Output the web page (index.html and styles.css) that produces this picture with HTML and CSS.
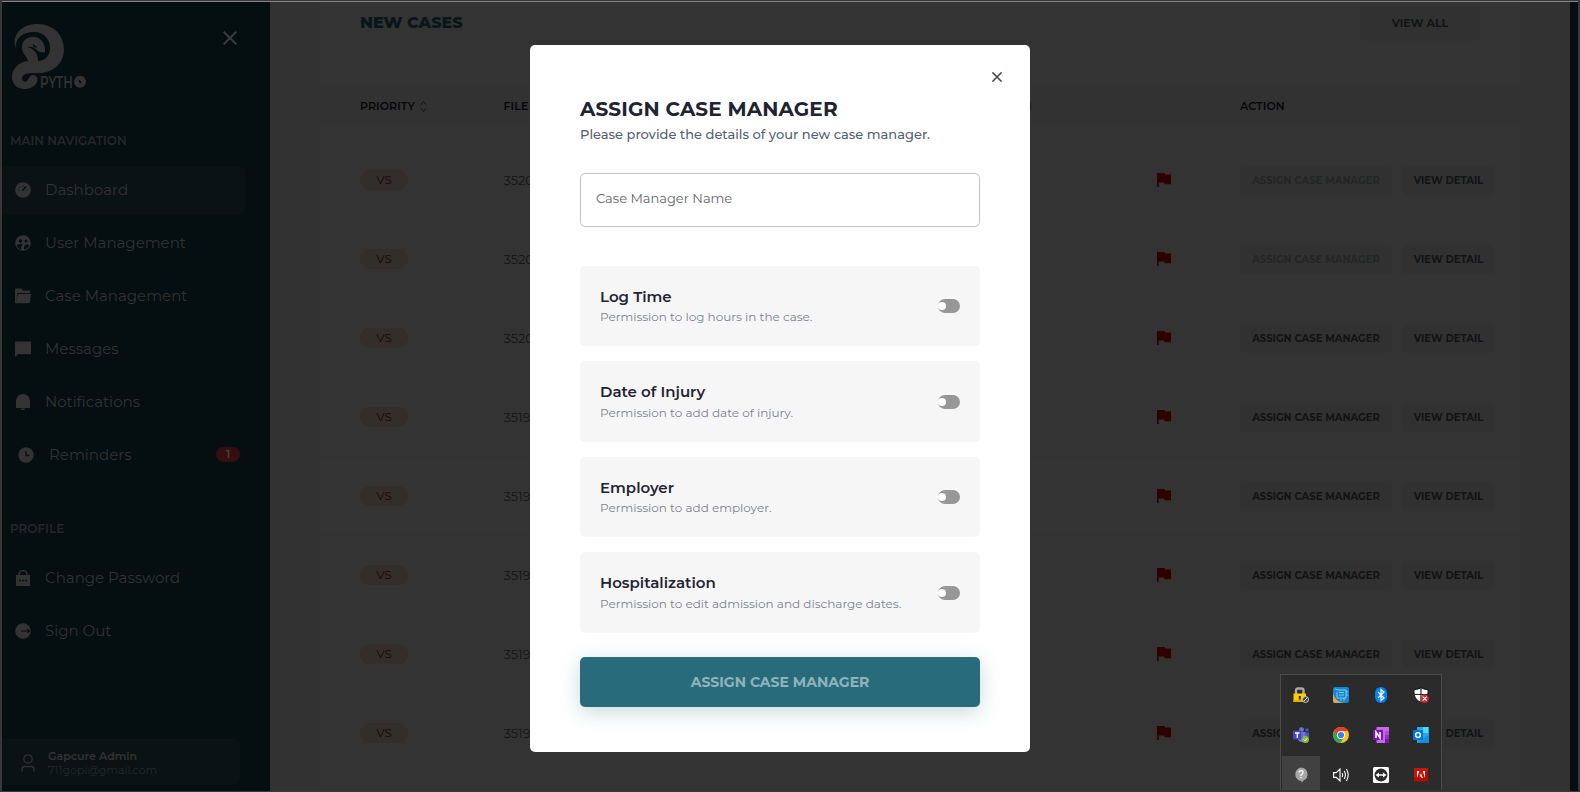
FILE: index.html
```html
<!DOCTYPE html>
<html lang="en">
<head>
<meta charset="utf-8">
<title>Assign Case Manager</title>
<link rel="stylesheet" href="styles.css">
</head>
<body>
<svg width="0" height="0" class="defs">
  <symbol id="flag" viewBox="0 0 14 14"><path d="M0 0h7.600l.6 1.600H14v9.600H7.600L7 9.600H1.700V14H0z"/></symbol>
</svg>
<div class="frame">
  <aside class="sidebar">
    <div class="brand">
      <svg class="logo" viewBox="30 66 240 210">
        <path fill="#333" d="M47 146C33 102 68 72 112 72c48 0 80 33 80 76 0 42-32 71-77 72H92c-18 0-27 8-26 17 2 12 15 9 19 0 4-11 16-15 23-9 13 13-2 39-35 39-23 0-37-16-37-36 0-26 22-44 44-47l33-1c25-1 37-19 37-40 0-28-22-48-49-47-33 0-57 19-54 50z"/>
        <path fill="#333" d="M84 184C82 170 66 163 66 142c-1-20 17-32 34-32 22 1 38 20 35 47-10 1-20-1-27-9-8-8-18-9-27-7 24 5 32 22 34 42-8 3-20 4-31 1z"/>
        <path d="M100 133l10 9-9-1z" stroke="#050e10" stroke-width="2" fill="#050e10"/>
        <text x="120" y="263" textLength="98" lengthAdjust="spacingAndGlyphs" font-size="49" font-weight="600" fill="#333">PYTH</text>
        <path fill="#333" fill-rule="evenodd" d="M240 227a18 18 0 1 0 0 36 18 18 0 0 0 0-36zm-4 11l8 7v6c-5 0-9-5-8-13z"/>
      </svg>
      <svg class="side-close" viewBox="0 0 14 14"><path d="M.7.7l12.600 12.600M13.300.7L.7 13.300" stroke="#3b3c3c" stroke-width="2"/></svg>
    </div>
    <h6 class="nav-title">MAIN NAVIGATION</h6>
    <nav class="nav">
      <a class="item active"><svg viewBox="0 0 16 16"><circle cx="8" cy="8" r="7.800"/><g stroke="#0a1213" fill="none"><path d="M7.500 8.500l3.500-4" stroke-width="1.600"/><path d="M3 8.200h1.200M4.500 5.200l.8.8M8 3.700v1M11.800 8.200H13"/></g></svg><span>Dashboard</span></a>
      <a class="item"><svg viewBox="0 0 16 16"><circle cx="8" cy="8" r="7.800"/><g fill="#050e10"><circle cx="5.500" cy="6" r="1.800"/><circle cx="11" cy="6" r="1.500"/><path d="M1.800 10.500c2-2 4-1.800 5.800-1.200-1.500 2-1.300 3-1.300 5.200-2-.3-3.800-2-4.500-4zM9 14.500c-.3-3 .5-5 2.500-5 1.500 0 2 .4 2.700 1-1 2.300-2.800 3.800-5.200 4z"/></g></svg><span>User Management</span></a>
      <a class="item"><svg viewBox="0 0 16 16"><path d="M0 .6h6.500L8 2.600h7V5H2.500L1.500 13V15.300H0z"/><path d="M3 6h13l-1 8.300q-.1 1-1.200 1H.8z"/></svg><span>Case Management</span></a>
      <a class="item"><svg viewBox="0 0 16 16"><path d="M0 .4h16v12.800H3.200L0 16z"/></svg><span>Messages</span></a>
      <a class="item"><svg viewBox="0 0 16 16"><path d="M1 14V7a7 7 0 0 1 14 0v7zM6 14.500h4c0 2-4 2-4 0z"/></svg><span>Notifications</span></a>
      <a class="item shifted"><svg viewBox="0 0 16 16"><circle cx="8" cy="8" r="7.700"/><path d="M8 4v4.500h3.500" stroke="#050e10" stroke-width="1.300" fill="none"/></svg><span>Reminders</span><b class="count">1</b></a>
    </nav>
    <h6 class="nav-title profile-title">PROFILE</h6>
    <nav class="nav">
      <a class="item"><svg viewBox="0 0 16 16"><path d="M1 5h14v11H1z"/><path d="M4 5.500V4.500a4 4 0 0 1 8 0v1" fill="none" stroke="#333" stroke-width="1.500"/><path d="M4 10.500h8" stroke="#050e10" stroke-width="1.300" stroke-dasharray="2 1"/></svg><span>Change Password</span></a>
      <a class="item"><svg viewBox="0 0 16 16"><circle cx="8" cy="8" r="7.800"/><path d="M6 8h8.500M12.500 6.200l2 1.800-2 1.800" stroke="#050e10" stroke-width="1.200" fill="none"/></svg><span>Sign Out</span></a>
    </nav>
    <div class="user">
      <svg viewBox="0 0 14 18"><circle cx="7" cy="5" r="4.200"/><path d="M1 17.500v-2.200q0-2.800 2.800-2.800h6.400q2.800 0 2.800 2.800v2.200"/></svg>
      <div><b>Gapcure Admin</b><small>711gopi@gmail.com</small></div>
    </div>
  </aside>
  <main class="main">
    <section class="panel">
      <header class="panel-head"><h2>NEW CASES</h2><button class="view-all">VIEW ALL</button></header>
      <div class="row head"><span>PRIORITY <svg class="sort" viewBox="0 0 7 11"><path d="M.7 3.500L3.500.8l2.800 2.700M.7 7.500l2.800 2.700 2.800-2.700" fill="none" stroke="#111"/></svg></span><span>FILE</span><span class="clipped">N</span><span></span><span>ACTION</span></div>
      <div class="rows">
        <div class="row"><span class="vs">VS</span><span>3520</span><span></span><svg class="flag"><use href="#flag"/></svg><div class="actions"><button disabled>ASSIGN CASE MANAGER</button><button>VIEW DETAIL</button></div></div>
        <div class="row"><span class="vs">VS</span><span>3520</span><span></span><svg class="flag"><use href="#flag"/></svg><div class="actions"><button disabled>ASSIGN CASE MANAGER</button><button>VIEW DETAIL</button></div></div>
        <div class="row"><span class="vs">VS</span><span>3520</span><span></span><svg class="flag"><use href="#flag"/></svg><div class="actions"><button>ASSIGN CASE MANAGER</button><button>VIEW DETAIL</button></div></div>
        <div class="row"><span class="vs">VS</span><span>3519</span><span></span><svg class="flag"><use href="#flag"/></svg><div class="actions"><button>ASSIGN CASE MANAGER</button><button>VIEW DETAIL</button></div></div>
        <div class="row"><span class="vs">VS</span><span>3519</span><span></span><svg class="flag"><use href="#flag"/></svg><div class="actions"><button>ASSIGN CASE MANAGER</button><button>VIEW DETAIL</button></div></div>
        <div class="row"><span class="vs">VS</span><span>3519</span><span></span><svg class="flag"><use href="#flag"/></svg><div class="actions"><button>ASSIGN CASE MANAGER</button><button>VIEW DETAIL</button></div></div>
        <div class="row"><span class="vs">VS</span><span>3519</span><span></span><svg class="flag"><use href="#flag"/></svg><div class="actions"><button>ASSIGN CASE MANAGER</button><button>VIEW DETAIL</button></div></div>
        <div class="row"><span class="vs">VS</span><span>3519</span><span></span><svg class="flag"><use href="#flag"/></svg><div class="actions"><button>ASSIGN CASE MANAGER</button><button>VIEW DETAIL</button></div></div>
      </div>
    </section>
  </main>
  <div class="strip"></div>
</div>

<div class="modal">
  <svg class="modal-close" viewBox="0 0 10 10"><path d="M.4.4l9.200 9.200M9.600.4L.4 9.600" stroke="#3c4257" stroke-width="1.500"/></svg>
  <h1>ASSIGN CASE MANAGER</h1>
  <p class="lead">Please provide the details of your new case manager.</p>
  <div class="field">Case Manager Name</div>
  <div class="perms">
    <div class="perm"><div><h3>Log Time</h3><p>Permission to log hours in the case.</p></div><i class="toggle"></i></div>
    <div class="perm"><div><h3>Date of Injury</h3><p>Permission to add date of injury.</p></div><i class="toggle"></i></div>
    <div class="perm"><div><h3>Employer</h3><p>Permission to add employer.</p></div><i class="toggle"></i></div>
    <div class="perm"><div><h3>Hospitalization</h3><p>Permission to edit admission and discharge dates.</p></div><i class="toggle"></i></div>
  </div>
  <button class="submit">ASSIGN CASE MANAGER</button>
</div>

<div class="tray">
  <span><svg viewBox="0 0 16 16"><path d="M3 7V3.500q0-2 2-2h3.500q2 0 2 2V7" fill="none" stroke="#a9a9a9" stroke-width="2.400"/><path fill="#fc0" d="M.5 6.500h12.500v8.500H.5z"/><path fill="#f0a800" d="M.5 13h12.500v2H.5z"/><path fill="#3a2a00" d="M5.800 9h2v3.500h-2z"/><circle cx="12.500" cy="12.500" r="3" fill="#444" stroke="#c8c8c8"/><path d="M10.500 14.500l4-4" stroke="#ddd"/></svg></span>
  <span><svg viewBox="0 0 16 16"><rect width="16" height="16" rx="2" fill="#1687c9"/><path d="M0 6v8q0 2 2 2h9Q2 15 0 6z" fill="#e3a350"/><path d="M5 3h8v8H4V5M6 5.500h5M6 8h5M2 2l3 1M8 12v2M11 11v3M13 5h2M13 8h2" fill="none" stroke="#8fe0ff" stroke-width=".8"/></svg></span>
  <span><svg viewBox="0 0 16 16"><rect x="2" width="12" height="16" rx="6" fill="#0082fc"/><path d="M5 5l6 6-3 2.500v-11L11 5l-6 6" fill="none" stroke="#fff" stroke-width="1.200"/></svg></span>
  <span><svg viewBox="0 0 16 16"><path d="M8 .7Q5 2.500 1 2.700C.8 9 2 12.500 8 15.500c6-3 7.200-6.500 7-12.800Q11 2.500 8 .7z" fill="#fff" stroke="#111"/><path d="M8 1v14M1 7.500h14" stroke="#222" stroke-width="1.200"/><circle cx="11.700" cy="11.700" r="4.200" fill="#d8262c"/><path d="M9.700 9.700l4 4M13.700 9.700l-4 4" stroke="#fff" stroke-width="1.200"/></svg></span>
  <span><svg viewBox="0 0 16 16"><circle cx="8.500" cy="2.700" r="2.400" fill="#6f79dc"/><circle cx="14" cy="3" r="1.700" fill="#4b55bd"/><path d="M6 5h7v6q0 4-4 4t-4-4z" fill="#7078df"/><path d="M12 5.500h4V9q0 3-3 3z" fill="#4b55bd"/><rect y="3.500" width="8.500" height="9" rx="1" fill="#4349b2"/><path d="M2 6h4.500M4.300 6v5" stroke="#fff" stroke-width="1.300"/><circle cx="12.500" cy="12.500" r="3.500" fill="#85b93b"/><path d="M10.800 12.500l1.300 1.300 2.200-2.500" stroke="#fff" fill="none"/></svg></span>
  <span><svg viewBox="0 0 16 16"><circle cx="8" cy="8" r="8" fill="#fbc116"/><path d="M1.100 4A8 8 0 0 1 14.900 4H8L4.600 10z" fill="#e33b2e"/><path d="M1.100 4A8 8 0 0 0 7.200 16L11.400 10H4.600z" fill="#2da94f"/><circle cx="8" cy="8" r="4" fill="#fff"/><circle cx="8" cy="8" r="3.100" fill="#3b7ded"/></svg></span>
  <span><svg viewBox="0 0 16 16"><path fill="#ca64ea" d="M3.500 0H16v16H3.500z"/><path fill="#ae4bd5" d="M12 4h4v4h-4z"/><path fill="#9332bf" d="M12 8h4v4h-4z"/><path fill="#7719aa" d="M12 12h4v4h-4zM0 3h10v10H0z"/><path d="M3 11V5l4 6V5" fill="none" stroke="#fff" stroke-width="1.500"/></svg></span>
  <span><svg viewBox="0 0 16 16"><path fill="#28a8ea" d="M4 0h12v16H4z"/><path fill="#50d9ff" d="M10 0h5v6h-5z"/><path fill="#0364b8" d="M4 6h6v5H4z"/><path fill="#1490df" d="M5 14l11-6v8H5z"/><rect y="3" width="10" height="10" rx=".7" fill="#0078d4"/><circle cx="5" cy="8" r="2.400" fill="none" stroke="#fff" stroke-width="1.400"/></svg></span>
  <span class="hover"><svg viewBox="0 0 16 16"><path d="M8 .5a6.800 6.800 0 0 1 2.500 13L8.500 16v-2A6.800 6.800 0 0 1 8 .5z" fill="#a5a5a5"/><path d="M6 5.500q0-1.800 2-1.800t2 1.600T8 8v1M8 10v1.300" fill="none" stroke="#fff" stroke-width="1.300"/></svg></span>
  <span><svg viewBox="0 0 16 16"><path d="M.6 5.600h2.600L7 2v12l-3.800-3.600H.6zM9 6q1.300 2 0 4M11.200 4q2.400 4 0 8M13.400 2q3.600 6 0 12" fill="none" stroke="#fff" stroke-width="1.100"/></svg></span>
  <span><svg viewBox="0 0 16 16"><rect width="16" height="16" rx="1.500" fill="#fff"/><circle cx="8" cy="8" r="6.500" fill="#2b2b2b"/><path d="M2.500 8L6 5.500v1.700h4V5.500L13.500 8 10 10.500V8.800H6v1.700z" fill="#fff"/></svg></span>
  <span><svg viewBox="0 0 16 16"><path fill="#b30b00" d="M1 1h14v13.500H1z"/><path fill="#c8140a" d="M1 1h14v4L1 11z"/><path fill="#fff" d="M4 4h2.300L4 11zM12 4H9.700L12 11zM8 6.300l2 4.700H8.700L8 9.500H6.700z"/></svg></span>
</div>
</body>
</html>
```

FILE: styles.css
```css
* { box-sizing: border-box; }
body { margin: 0; width: 1580px; height: 792px; overflow: hidden; position: relative; background: #333; font-family: "Montserrat", Inter, "Open Sans", sans-serif; }
h1, h2, h3, h6, p { margin: 0; }
button { border: 0; font-family: inherit; padding: 0; white-space: nowrap; }
.defs { position: absolute; }

.frame { height: 792px; display: grid; grid-template-columns: 268px 1300px 8px; grid-template-rows: 1px 789px; border: solid #383838; border-width: 1px 2px; }
.frame::before { content: ""; grid-column: 1 / -1; background: #858585; }

.sidebar { background: #050e10; color: #333; display: flex; flex-direction: column; }
.brand { display: flex; justify-content: space-between; padding: 20px 32px 0 8px; height: 131px; }
.logo { width: 80px; height: 70px; }
.side-close { width: 14px; height: 14px; margin-top: 9px; margin-right: 1px; }
.nav-title { padding-left: 8px; height: 16px; line-height: 16px; font-size: 12px; font-weight: 600; color: #232929; white-space: nowrap; }
.nav { display: flex; flex-direction: column; gap: 5px; padding-top: 16.500px; }
.item { display: flex; align-items: center; height: 48px; width: 243px; padding-left: 13px; font-size: 15px; white-space: nowrap; }
.item svg { width: 16px; height: 16px; margin-right: 14px; fill: #333; }
.item.active { background: #0a1213; border-radius: 0 6px 6px 0; }
.item.shifted { padding-left: 15.500px; }
.item.shifted svg { margin-right: 15.500px; }
.count { margin-left: auto; margin-right: 5px; width: 24px; height: 15px; border-radius: 8px; background: #370e10; font-size: 11px; line-height: 15px; text-align: center; font-weight: 600; color: #444; }
.profile-title { margin-top: 42.500px; }
.user { width: 238px; height: 46px; margin-top: auto; margin-bottom: 6px; background: #0a1213; border-radius: 0 6px 6px 0; display: flex; align-items: center; padding: 2px 0 0 18.500px; }
.user svg { width: 14px; height: 18px; fill: none; stroke: #333; stroke-width: 1.300; margin-right: 13.500px; }
.user b, .user small { display: block; font-size: 11px; line-height: 14px; white-space: nowrap; }
.user b { font-weight: 600; }
.user small { color: #242a2a; }

.main { background: #323232; padding: 0 50px; height: 789px; overflow: hidden; }
.panel { background: #333; height: 789px; overflow: hidden; }
.panel-head { height: 83px; display: flex; justify-content: space-between; padding: 3px 40px 0; }
.panel-head h2 { font-size: 16px; line-height: 20px; margin-top: 8px; font-weight: 800; color: #08161a; }
.view-all { width: 120px; height: 36px; border-radius: 6px; background: #313131; color: #111414; font-size: 11px; font-weight: 700; }
.row { display: grid; grid-template-columns: 143.500px 519px 134px 83.500px 1fr; align-items: center; padding-left: 40px; height: 79px; border-bottom: 1px solid #313131; font-size: 13px; color: #141516; }
.row.head { height: 40px; border: 0; padding-top: 2px; background: #323232; font-size: 11px; font-weight: 600; letter-spacing: .1px; color: #060609; }
.sort { width: 7px; height: 11px; vertical-align: -2px; margin-left: 2px; }
.clipped { text-align: right; width: 7px; }
.rows { padding-top: 16px; }
.vs { width: 48px; height: 20px; border-radius: 10px; background: #332d2c; color: #1c0708; font-size: 12px; line-height: 20px; text-align: center; }
.flag { width: 14px; height: 14px; fill: #2e0000; }
.actions { display: flex; gap: 10px; }
.actions button { width: 93px; height: 29px; border-radius: 6px; background: #313131; color: #111314; font-size: 10px; font-weight: 700; }
.actions button:first-child { width: 152px; }
.actions button:disabled { color: #242525; }
.strip { background: #050e10; }

.modal { position: absolute; left: 530px; top: 45px; width: 500px; height: 707px; background: #fff; border-radius: 5px; padding: 50px 50px 0; display: flex; flex-direction: column; color: #1f2433; }
.modal-close { position: absolute; width: 10px; height: 10px; right: 28px; top: 27px; }
.modal h1 { font-size: 20px; line-height: 28px; font-weight: 700; letter-spacing: .13px; white-space: nowrap; }
.lead { font-size: 13px; line-height: 20px; margin-top: 1px; color: #565e75; font-weight: 500; white-space: nowrap; }
.field { height: 54px; margin-top: 29px; border: 1px solid #c3c2cc; border-radius: 5px; padding: 14px 15px 0; font-size: 13px; line-height: 20px; color: #62646e; }
.perms { display: grid; gap: 15px; margin-top: 39px; }
.perm { height: 80.400px; padding: 0 20px; background: #f6f6f6; border-radius: 5px; display: flex; align-items: center; justify-content: space-between; }
.perm > div { padding-top: 1.600px; }
.perm:nth-child(even) p { padding-top: 1px; margin-bottom: -1px; }
.perm:last-child .toggle { margin-top: 1px; }
.perm h3 { font-size: 15px; font-weight: 600; line-height: 20px; }
.perm p { font-size: 12px; line-height: 20px; color: #7c8192; white-space: nowrap; }
.toggle { width: 22px; height: 14px; border-radius: 7px; background: #979797; display: flex; align-items: center; }
.toggle::before { content: ""; width: 8px; height: 8px; border-radius: 50%; background: #fff; }
.submit { margin-top: 24px; height: 50px; border-radius: 5px; background: #286c7b; color: #8fb3bb; font-size: 14px; font-weight: 700; box-shadow: 0 5px 20px rgba(40, 108, 123, .25); }

.tray { position: absolute; left: 1280px; top: 674px; width: 162px; height: 116px; background: #2b2b2b; border: 1px solid #4a4a4a; border-bottom: 0; display: grid; grid-template-columns: repeat(4, 40px); grid-template-rows: repeat(3, 40px); overflow: hidden; }
.tray span { display: grid; place-items: center; }
.tray svg { width: 16px; height: 16px; }
.tray .hover { background: #414141; background-clip: content-box; padding: 1px; }
```
